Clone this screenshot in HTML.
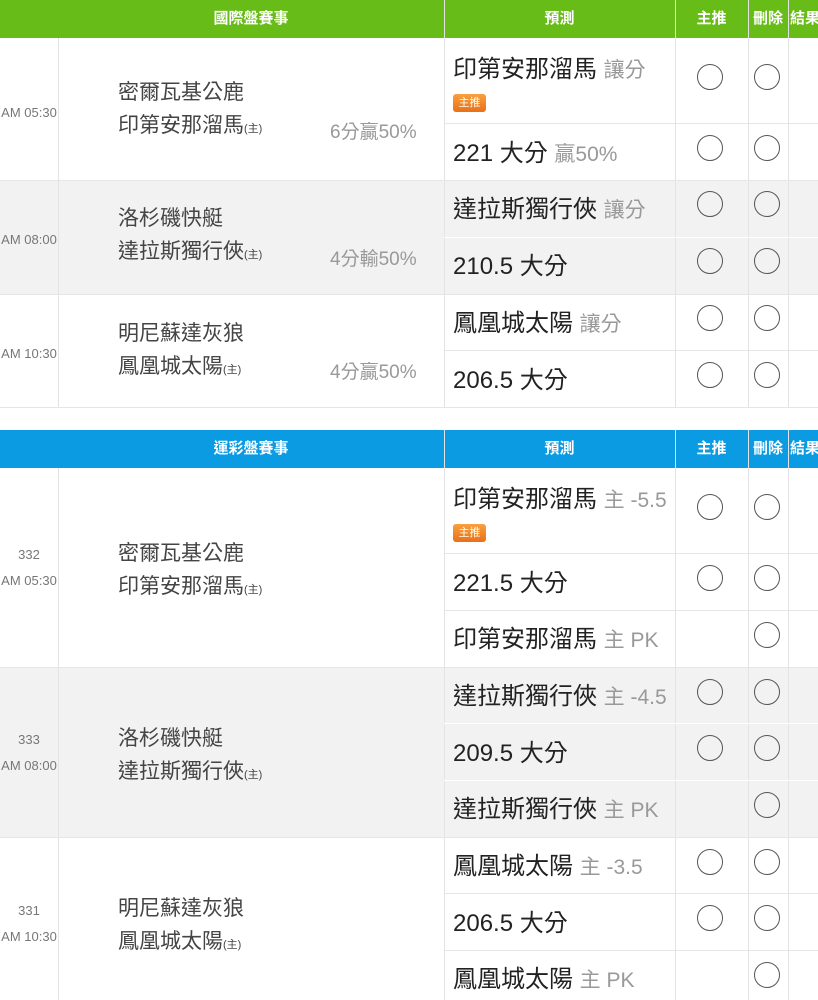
<!DOCTYPE html><html><head><meta charset="utf-8"><style>
*{margin:0;padding:0;box-sizing:border-box}
body{width:818px;height:1000px;overflow:hidden;background:#fff;font-family:"Liberation Sans","Noto Sans CJK TC",sans-serif;position:relative}
.a{position:absolute}
.hd{color:#fff;font-size:15px;font-weight:bold;text-align:center;line-height:38px;position:absolute}
.vl{position:absolute;width:1px;background:#e3e3e3}
.hl{position:absolute;height:1px;background:#e6e6e6}
.c{position:absolute;width:26px;height:26px;border:1.6px solid #555;border-radius:50%}
.tm{position:absolute;left:0;width:58px;text-align:center;font-size:13px;color:#777;line-height:26px}
.tn{position:absolute;left:118px;font-size:21px;color:#444;line-height:33px}
.tn small{font-size:11px}
.pr{position:absolute;left:453px;font-size:24px;color:#222;white-space:nowrap;line-height:28px;margin-top:2px}
.pr span{color:#999;font-size:21px}
.rs{position:absolute;left:330px;font-size:19px;color:#999}
.bd{position:absolute;left:453px;width:33px;height:18px;background:linear-gradient(#f8a040,#e8701a);border-radius:3px;color:#ffe;font-size:11px;text-align:center;line-height:18px}
</style></head><body>
<div class="a" style="left:0;top:0;width:818px;height:38px;background:#68bc18"></div>
<div class="hd" style="left:58px;width:386px;top:0">國際盤賽事</div>
<div class="hd" style="left:444px;width:231px;top:0">預測</div>
<div class="hd" style="left:675px;width:73px;top:0">主推</div>
<div class="hd" style="left:748px;width:40px;top:0">刪除</div>
<div class="hd" style="left:788px;width:40px;top:0;text-align:left;padding-left:2px">結果</div>
<div class="a" style="left:0;top:180px;width:818px;height:114px;background:#f2f2f2"></div>
<div class="a" style="left:0;top:430px;width:818px;height:38px;background:#0a9be3"></div>
<div class="hd" style="left:58px;width:386px;top:430px">運彩盤賽事</div>
<div class="hd" style="left:444px;width:231px;top:430px">預測</div>
<div class="hd" style="left:675px;width:73px;top:430px">主推</div>
<div class="hd" style="left:748px;width:40px;top:430px">刪除</div>
<div class="hd" style="left:788px;width:40px;top:430px;text-align:left;padding-left:2px">結果</div>
<div class="a" style="left:0;top:667px;width:818px;height:170px;background:#f2f2f2"></div>
<div class="vl" style="left:58px;top:38px;height:369px"></div>
<div class="vl" style="left:444px;top:0;height:407px"></div>
<div class="vl" style="left:675px;top:0;height:407px"></div>
<div class="vl" style="left:748px;top:0;height:407px"></div>
<div class="vl" style="left:788px;top:0;height:407px"></div>
<div class="vl" style="left:58px;top:468px;height:532px"></div>
<div class="vl" style="left:444px;top:430px;height:570px"></div>
<div class="vl" style="left:675px;top:430px;height:570px"></div>
<div class="vl" style="left:748px;top:430px;height:570px"></div>
<div class="vl" style="left:788px;top:430px;height:570px"></div>
<div class="hl" style="left:444px;width:374px;top:123px"></div>
<div class="hl" style="left:0;width:818px;top:180px"></div>
<div class="hl" style="left:444px;width:374px;top:237px;background:#fff"></div>
<div class="hl" style="left:0;width:818px;top:294px"></div>
<div class="hl" style="left:444px;width:374px;top:350px"></div>
<div class="hl" style="left:0;width:818px;top:407px"></div>
<div class="hl" style="left:444px;width:374px;top:553px"></div>
<div class="hl" style="left:444px;width:374px;top:610px"></div>
<div class="hl" style="left:0;width:818px;top:667px"></div>
<div class="hl" style="left:444px;width:374px;top:723px;background:#fff"></div>
<div class="hl" style="left:444px;width:374px;top:780px;background:#fff"></div>
<div class="hl" style="left:0;width:818px;top:837px"></div>
<div class="hl" style="left:444px;width:374px;top:893px"></div>
<div class="hl" style="left:444px;width:374px;top:950px"></div>

<div class="tm" style="top:100px">AM 05:30</div>
<div class="tn" style="top:76px">密爾瓦基公鹿<br>印第安那溜馬<small>(主)</small></div>
<div class="rs" style="top:117px">6分贏50%</div>
<div class="pr" style="top:54px">印第安那溜馬 <span>讓分</span></div>
<div class="bd" style="top:94px">主推</div>
<div class="pr" style="top:138px">221 大分 <span>贏50%</span></div>
<div class="tm" style="top:227px">AM 08:00</div>
<div class="tn" style="top:202px">洛杉磯快艇<br>達拉斯獨行俠<small>(主)</small></div>
<div class="rs" style="top:244px">4分輸50%</div>
<div class="pr" style="top:194px">達拉斯獨行俠 <span>讓分</span></div>
<div class="pr" style="top:251px">210.5 大分</div>
<div class="tm" style="top:341px">AM 10:30</div>
<div class="tn" style="top:317px">明尼蘇達灰狼<br>鳳凰城太陽<small>(主)</small></div>
<div class="rs" style="top:357px">4分贏50%</div>
<div class="pr" style="top:308px">鳳凰城太陽 <span>讓分</span></div>
<div class="pr" style="top:365px">206.5 大分</div>

<div class="tm" style="top:542px">332<br>AM 05:30</div>
<div class="tn" style="top:537px">密爾瓦基公鹿<br>印第安那溜馬<small>(主)</small></div>
<div class="pr" style="top:484px">印第安那溜馬 <span>主 -5.5</span></div>
<div class="bd" style="top:524px">主推</div>
<div class="pr" style="top:568px">221.5 大分</div>
<div class="pr" style="top:624px">印第安那溜馬 <span>主 PK</span></div>
<div class="tm" style="top:727px">333<br>AM 08:00</div>
<div class="tn" style="top:722px">洛杉磯快艇<br>達拉斯獨行俠<small>(主)</small></div>
<div class="pr" style="top:681px">達拉斯獨行俠 <span>主 -4.5</span></div>
<div class="pr" style="top:738px">209.5 大分</div>
<div class="pr" style="top:794px">達拉斯獨行俠 <span>主 PK</span></div>
<div class="tm" style="top:898px">331<br>AM 10:30</div>
<div class="tn" style="top:892px">明尼蘇達灰狼<br>鳳凰城太陽<small>(主)</small></div>
<div class="pr" style="top:851px">鳳凰城太陽 <span>主 -3.5</span></div>
<div class="pr" style="top:908px">206.5 大分</div>
<div class="pr" style="top:964px">鳳凰城太陽 <span>主 PK</span></div>

<div class="c" style="left:697px;top:64px"></div><div class="c" style="left:754px;top:64px"></div>
<div class="c" style="left:697px;top:135px"></div><div class="c" style="left:754px;top:135px"></div>
<div class="c" style="left:697px;top:191px"></div><div class="c" style="left:754px;top:191px"></div>
<div class="c" style="left:697px;top:248px"></div><div class="c" style="left:754px;top:248px"></div>
<div class="c" style="left:697px;top:305px"></div><div class="c" style="left:754px;top:305px"></div>
<div class="c" style="left:697px;top:362px"></div><div class="c" style="left:754px;top:362px"></div>
<div class="c" style="left:697px;top:494px"></div><div class="c" style="left:754px;top:494px"></div>
<div class="c" style="left:697px;top:565px"></div><div class="c" style="left:754px;top:565px"></div>
<div class="c" style="left:754px;top:622px"></div>
<div class="c" style="left:697px;top:679px"></div><div class="c" style="left:754px;top:679px"></div>
<div class="c" style="left:697px;top:735px"></div><div class="c" style="left:754px;top:735px"></div>
<div class="c" style="left:754px;top:792px"></div>
<div class="c" style="left:697px;top:849px"></div><div class="c" style="left:754px;top:849px"></div>
<div class="c" style="left:697px;top:905px"></div><div class="c" style="left:754px;top:905px"></div>
<div class="c" style="left:754px;top:962px"></div>
</body></html>
